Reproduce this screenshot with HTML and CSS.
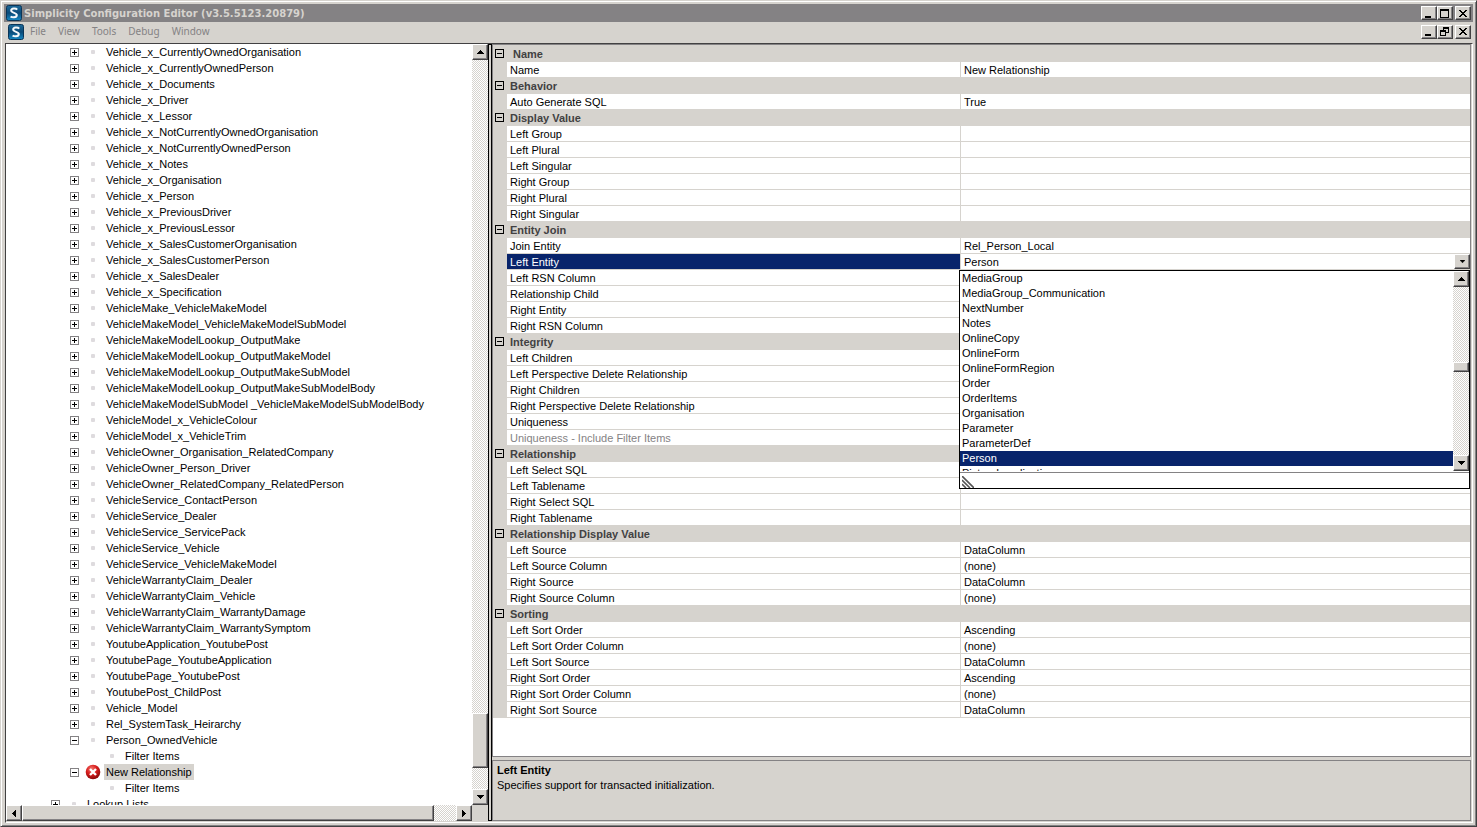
FILE: index.html
```html
<!DOCTYPE html>
<html lang="en">

<head>
    <meta charset="UTF-8">
    <meta name="viewport" content="width=device-width, initial-scale=1.0">
    <title>Simplicity Configuration Editor</title>
    <link rel="stylesheet" href="styles.css">
</head>

<body>
    <svg class="defs" width="0" height="0" aria-hidden="true">
        <defs>
            <linearGradient id="logoFill" x1="0" y1="0" x2="0" y2="1">
                <stop offset="0" stop-color="#1d6a9a"/>
                <stop offset="0.5" stop-color="#0b4a78"/>
                <stop offset="1" stop-color="#1488c4"/>
            </linearGradient>
            <radialGradient id="errorFill" cx="0.4" cy="0.3" r="0.7">
                <stop offset="0" stop-color="#f47a70"/>
                <stop offset="0.5" stop-color="#d81e1e"/>
                <stop offset="1" stop-color="#8c0808"/>
            </radialGradient>
            <symbol id="logo" viewBox="0 0 16 16">
                <rect x="0.5" y="0.5" width="15" height="15" rx="2" fill="url(#logoFill)" stroke="#0a3558"/>
                <path d="M11.2 4.6C10 3.2 5.2 3 5.2 5.6C5.2 8.2 11 7.6 10.8 10.2C10.6 13 6 12.6 4.6 11.4" fill="none" stroke="#f4f8fb" stroke-width="2"/>
            </symbol>
            <symbol id="up" viewBox="0 0 7 4"><path d="M3 0h1v1h1v1h1v1h1v1H0V3h1V2h1V1h1z"/></symbol>
            <symbol id="down" viewBox="0 0 7 4"><path d="M0 0h7v1H6v1H5v1H4v1H3V3H2V2H1V1H0z"/></symbol>
            <symbol id="left" viewBox="0 0 4 7"><path d="M4 0v7H3V6H2V5H1V4H0V3h1V2h1V1h1V0z"/></symbol>
            <symbol id="right" viewBox="0 0 4 7"><path d="M0 0v7h1V6h1V5h1V4h1V3H3V2H2V1H1V0z"/></symbol>
            <symbol id="min" viewBox="0 0 10 9"><path d="M1 7h6v2H1z"/></symbol>
            <symbol id="max" viewBox="0 0 10 9"><path d="M0 0h9v9H0zM1 2v6h7V2z" fill-rule="evenodd"/></symbol>
            <symbol id="restore" viewBox="0 0 10 9"><path d="M3 0h6v6H6v3H0V3h3zM4 2v1h2v2h2V2zM1 5v3h4V5z" fill-rule="evenodd"/></symbol>
            <symbol id="close" viewBox="0 0 10 9"><path d="M1 1h2v1h1v1h2V2h1V1h2v1H8v1H7v1H6v1h1v1h1v1h1v1H7V7H6V6H4v1H3v1H1V7h1V6h1V5h1V4H3V3H2V2H1z"/></symbol>
        </defs>
    </svg>

    <div class="window">
        <header class="title-bar">
            <svg class="logo"><use href="#logo"/></svg>
            <h1>Simplicity Configuration Editor (v3.5.5123.20879)</h1>
            <div class="window-buttons">
                <button aria-label="Minimize"><svg><use href="#min"/></svg></button>
                <button aria-label="Maximize"><svg><use href="#max"/></svg></button>
                <button class="close" aria-label="Close"><svg><use href="#close"/></svg></button>
            </div>
        </header>
        <nav class="menu-bar">
            <svg class="logo"><use href="#logo"/></svg>
            <button class="menu">File</button>
            <button class="menu">View</button>
            <button class="menu">Tools</button>
            <button class="menu">Debug</button>
            <button class="menu">Window</button>
            <div class="window-buttons">
                <button aria-label="Minimize child"><svg><use href="#min"/></svg></button>
                <button aria-label="Restore child"><svg><use href="#restore"/></svg></button>
                <button class="close" aria-label="Close child"><svg><use href="#close"/></svg></button>
            </div>
        </nav>

        <main class="content">
            <section class="tree-pane">
                <ul class="tree" id="tree"></ul>
                <div class="scroll-v tree-scroll">
                    <button aria-label="Scroll up"><svg><use href="#up"/></svg></button>
                    <div class="before"></div>
                    <div class="thumb"></div>
                    <div class="after"></div>
                    <button aria-label="Scroll down"><svg><use href="#down"/></svg></button>
                </div>
                <div class="scroll-h">
                    <button aria-label="Scroll left"><svg><use href="#left"/></svg></button>
                    <div class="thumb"></div>
                    <div class="after"></div>
                    <button aria-label="Scroll right"><svg><use href="#right"/></svg></button>
                </div>
            </section>
            <div class="splitter"></div>
            <section class="property-pane">
                <div class="property-grid">
                    <table>
                        <colgroup>
                            <col class="col-gutter">
                            <col class="col-name">
                            <col>
                        </colgroup>
                        <tbody id="properties"></tbody>
                    </table>
                </div>
                <div class="description">
                    <h2>Left Entity</h2>
                    <p>Specifies support for transacted initialization.</p>
                </div>
            </section>
        </main>
    </div>

    <template id="entityEditor">
        <div class="editor">
            <input type="text" id="leftEntity" value="Person">
            <button aria-label="Open list"><svg><use href="#down"/></svg></button>
        </div>
        <div class="drop-down">
            <div class="drop-list">
                <select size="14" aria-label="Left Entity">
                    <option>MediaGroup</option>
                    <option>MediaGroup_Communication</option>
                    <option>NextNumber</option>
                    <option>Notes</option>
                    <option>OnlineCopy</option>
                    <option>OnlineForm</option>
                    <option>OnlineFormRegion</option>
                    <option>Order</option>
                    <option>OrderItems</option>
                    <option>Organisation</option>
                    <option>Parameter</option>
                    <option>ParameterDef</option>
                    <option selected>Person</option>
                    <option>PictureLocalisation</option>
                </select>
                <div class="scroll-v list-scroll">
                    <button aria-label="Scroll list up"><svg><use href="#up"/></svg></button>
                    <div class="before"></div>
                    <div class="thumb"></div>
                    <div class="after"></div>
                    <button aria-label="Scroll list down"><svg><use href="#down"/></svg></button>
                </div>
            </div>
            <div class="grip">
                <svg width="12" height="12"><path d="M0 0L12 12M0 4L8 12M0 8L4 12" stroke="#555" stroke-width="1.6"/></svg>
            </div>
        </div>
    </template>

    <script src="app.js"></script>
</body>

</html>
```
FILE: app.js
```js
function $(id) {
    return document.getElementById(id)
}

const relationships = [
    'Vehicle_x_CurrentlyOwnedOrganisation',
    'Vehicle_x_CurrentlyOwnedPerson',
    'Vehicle_x_Documents',
    'Vehicle_x_Driver',
    'Vehicle_x_Lessor',
    'Vehicle_x_NotCurrentlyOwnedOrganisation',
    'Vehicle_x_NotCurrentlyOwnedPerson',
    'Vehicle_x_Notes',
    'Vehicle_x_Organisation',
    'Vehicle_x_Person',
    'Vehicle_x_PreviousDriver',
    'Vehicle_x_PreviousLessor',
    'Vehicle_x_SalesCustomerOrganisation',
    'Vehicle_x_SalesCustomerPerson',
    'Vehicle_x_SalesDealer',
    'Vehicle_x_Specification',
    'VehicleMake_VehicleMakeModel',
    'VehicleMakeModel_VehicleMakeModelSubModel',
    'VehicleMakeModelLookup_OutputMake',
    'VehicleMakeModelLookup_OutputMakeModel',
    'VehicleMakeModelLookup_OutputMakeSubModel',
    'VehicleMakeModelLookup_OutputMakeSubModelBody',
    'VehicleMakeModelSubModel _VehicleMakeModelSubModelBody',
    'VehicleModel_x_VehicleColour',
    'VehicleModel_x_VehicleTrim',
    'VehicleOwner_Organisation_RelatedCompany',
    'VehicleOwner_Person_Driver',
    'VehicleOwner_RelatedCompany_RelatedPerson',
    'VehicleService_ContactPerson',
    'VehicleService_Dealer',
    'VehicleService_ServicePack',
    'VehicleService_Vehicle',
    'VehicleService_VehicleMakeModel',
    'VehicleWarrantyClaim_Dealer',
    'VehicleWarrantyClaim_Vehicle',
    'VehicleWarrantyClaim_WarrantyDamage',
    'VehicleWarrantyClaim_WarrantySymptom',
    'YoutubeApplication_YoutubePost',
    'YoutubePage_YoutubeApplication',
    'YoutubePage_YoutubePost',
    'YoutubePost_ChildPost',
    'Vehicle_Model',
    'Rel_SystemTask_Heirarchy'
]

const nodes = relationships.map(name => ({ name, level: 'relation', sign: '+' })).concat([
    { name: 'Person_OwnedVehicle', level: 'relation', sign: '-' },
    { name: 'Filter Items', level: 'leaf' },
    { name: 'New Relationship', level: 'relation', sign: '-', error: true },
    { name: 'Filter Items', level: 'leaf' },
    { name: 'Lookup Lists', level: 'root', sign: '+' }
])

// a row is [name, value], a disabled row has a third item
const groups = {
    'Name': [['Name', 'New Relationship']],
    'Behavior': [['Auto Generate SQL', 'True']],
    'Display Value': [['Left Group'], ['Left Plural'], ['Left Singular'], ['Right Group'], ['Right Plural'], ['Right Singular']],
    'Entity Join': [['Join Entity', 'Rel_Person_Local'], ['Left Entity', 'Person'], ['Left RSN Column'], ['Relationship Child'], ['Right Entity'], ['Right RSN Column']],
    'Integrity': [['Left Children'], ['Left Perspective Delete Relationship'], ['Right Children'], ['Right Perspective Delete Relationship'], ['Uniqueness'], ['Uniqueness - Include Filter Items', '', true]],
    'Relationship': [['Left Select SQL'], ['Left Tablename'], ['Right Select SQL'], ['Right Tablename']],
    'Relationship Display Value': [['Left Source', 'DataColumn'], ['Left Source Column', '(none)'], ['Right Source', 'DataColumn'], ['Right Source Column', '(none)']],
    'Sorting': [['Left Sort Order', 'Ascending'], ['Left Sort Order Column', '(none)'], ['Left Sort Source', 'DataColumn'], ['Right Sort Order', 'Ascending'], ['Right Sort Order Column', '(none)'], ['Right Sort Source', 'DataColumn']]
}

function expander(sign, label) {
    const path = sign == '+' ? 'M2 4h5v1H2zM4 2h1v5H4z' : 'M2 4h5v1H2z'
    return `<button class="expander" aria-label="Toggle ${label}"><svg viewBox="0 0 9 9"><path class="frame" d="M0 0h9v9H0zM1 1v7h7V1z" fill-rule="evenodd"/><path d="${path}"/></svg></button>`
}

function nodeIcon(node) {
    if (!node.error) return '<span class="dot"></span>'
    return '<svg class="error" viewBox="0 0 16 16"><circle cx="8" cy="8" r="7.3" fill="url(#errorFill)"/><path d="M5 5L11 11M11 5L5 11" stroke="#fff" stroke-width="2.4"/></svg>'
}

$('tree').innerHTML = nodes.map(node => `<li class="${node.level}">
    ${node.sign ? expander(node.sign, node.name) : ''}
    <span class="icon">${nodeIcon(node)}</span>
    <span class="label ${node.error ? 'selected' : ''}">${node.name}</span>
</li>`).join('')

function propertyRow([name, value, disabled]) {
    const current = name == 'Left Entity'
    return `<tr class="${current ? 'current' : ''} ${disabled ? 'disabled' : ''}">
        <td class="gutter"></td>
        <th scope="row">${current ? '<label for="leftEntity">Left Entity</label>' : name}</th>
        <td class="value">${current ? $('entityEditor').innerHTML : value || ''}</td>
    </tr>`
}

$('properties').innerHTML = Object.keys(groups).map(group => `<tr class="category">
    <td class="gutter">${expander('-', group)}</td>
    <th colspan="2" class="${group == 'Name' ? 'first' : ''}">${group}</th>
</tr>` + groups[group].map(propertyRow).join('')).join('')
```
FILE: styles.css
```css
* {
    box-sizing: border-box;
}

body {
    margin: 0;
    height: 100vh;
    overflow: hidden;
    background-color: #d6d3ce;
    color: #000;
    font-family: "Liberation Sans", Arial, sans-serif;
    font-size: 11px;
    line-height: 15px;
}

button {
    display: flex;
    align-items: center;
    justify-content: center;
    flex: none;
    margin: 0;
    padding: 0;
    border: 1px solid;
    border-color: #fff #424142 #424142 #fff;
    background-color: #d6d3ce;
    box-shadow: inset -1px -1px #848284;
    font: inherit;
}

h1, h2, p, ul {
    margin: 0;
    padding: 0;
}

.defs {
    position: absolute;
}

.window {
    display: flex;
    flex-direction: column;
    height: 100%;
    padding: 3px;
    border: 1px solid;
    border-color: #d6d3ce #424142 #424142 #d6d3ce;
    box-shadow: inset 1px 1px #fff, inset -1px -1px #848284;
}

.title-bar {
    display: flex;
    align-items: center;
    gap: 2px;
    flex: none;
    height: 18px;
    padding: 0 2px;
    background-color: #848284;
    color: #d6d3ce;
}

.title-bar h1 {
    flex: 1;
    font-family: "DejaVu Sans", sans-serif;
    font-size: 10px;
    font-weight: bold;
}

.logo {
    flex: none;
    width: 16px;
    height: 16px;
}

.window-buttons {
    display: flex;
}

.window-buttons button {
    width: 16px;
    height: 14px;
}

.window-buttons svg {
    width: 10px;
    height: 9px;
}

.window-buttons .close {
    margin-left: 2px;
}

.menu-bar {
    display: flex;
    align-items: center;
    flex: none;
    height: 21px;
    padding: 0 2px 2px 4px;
}

.menu {
    padding: 0 6px;
    border: 0;
    box-shadow: none;
    color: #848284;
    font-family: "Noto Sans", sans-serif;
    font-size: 10px;
}

.menu-bar .window-buttons {
    margin-left: auto;
}

.content {
    display: flex;
    flex: 1;
    min-height: 0;
    margin-left: 1px;
    padding: 0 1px 1px 0;
    border: 1px solid;
    border-color: #424142 #fff #fff #424142;
}

.tree-pane {
    display: grid;
    grid-template-columns: 1fr 16px;
    grid-template-rows: 1fr 16px;
    flex: none;
    width: 482px;
}

.tree {
    overflow: hidden;
    background-color: #fff;
    list-style: none;
}

.tree li {
    display: flex;
    align-items: center;
    height: 16px;
    white-space: nowrap;
}

.tree .relation {
    padding-left: 64px;
}

.tree .leaf {
    padding-left: 98px;
}

.tree .root {
    padding-left: 45px;
}

.expander {
    border: 0;
    background-color: #fff;
    box-shadow: none;
}

.expander svg {
    display: block;
    width: 9px;
    height: 9px;
}

.frame {
    fill: #848284;
}

.icon {
    display: flex;
    align-items: center;
    justify-content: center;
    width: 16px;
    height: 16px;
}

.expander + .icon {
    margin-left: 6px;
}

.dot {
    width: 4px;
    height: 4px;
    border-radius: 1px;
    background-color: #dedbde;
}

.error {
    width: 16px;
    height: 16px;
}

.label {
    height: 16px;
    margin-left: 3px;
    padding: 0 2px;
    line-height: 16px;
}

.label.selected {
    background-color: #d6d3ce;
}

.scroll-v,
.scroll-h {
    display: flex;
    background: repeating-conic-gradient(#fff 0 25%, #d6d3ce 0 50%) 0 0 / 2px 2px;
}

.scroll-v {
    flex-direction: column;
    width: 16px;
}

.scroll-v button,
.scroll-h button {
    width: 16px;
    height: 16px;
}

.scroll-v svg,
.editor svg {
    width: 7px;
    height: 4px;
}

.scroll-h svg {
    width: 4px;
    height: 7px;
}

.thumb {
    border: 1px solid;
    border-color: #fff #424142 #424142 #fff;
    background-color: #d6d3ce;
    box-shadow: inset -1px -1px #848284;
}

.tree-scroll .before {
    flex: 654;
}

.tree-scroll .thumb {
    flex: 53;
}

.tree-scroll .after {
    flex: 21;
}

.scroll-h .thumb {
    flex: 412;
}

.scroll-h .after {
    flex: 22;
}

.splitter {
    flex: none;
    width: 4px;
    border: 1px solid #000;
    background-color: #d6d3ce;
    cursor: col-resize;
}

.property-pane {
    display: flex;
    flex: 1;
    flex-direction: column;
    gap: 3px;
    min-width: 0;
}

.property-grid {
    flex: 1;
    min-height: 0;
    border: 1px solid #848284;
    background-color: #fff;
}

.property-grid table {
    width: 100%;
    border-top: 1px solid #d6d3ce;
    border-spacing: 0;
    table-layout: fixed;
}

.col-gutter {
    width: 14px;
}

.col-name {
    width: 454px;
}

.property-grid tr {
    height: 16px;
}

.property-grid th,
.property-grid td {
    height: 16px;
    padding: 1px 3px 0;
    border-bottom: 1px solid #d6d3ce;
    font-weight: normal;
    line-height: 14px;
    text-align: left;
    white-space: nowrap;
}

.property-grid th {
    border-right: 1px solid #d6d3ce;
}

.property-grid .gutter {
    padding: 0 2px;
    background-color: #d6d3ce;
}

.property-grid .category th {
    border-right: 0;
    background-color: #d6d3ce;
    color: #424142;
    font-weight: bold;
}

.property-grid .category .first {
    padding-left: 6px;
}

.gutter .expander {
    background-color: #d6d3ce;
}

.gutter .frame {
    fill: #000;
}

.property-grid .current th {
    background-color: #08246b;
    color: #fff;
}

.property-grid .disabled th {
    color: #848284;
}

.property-grid .value {
    position: relative;
}

.property-grid .current .value {
    padding: 0 0 0 3px;
}

.editor {
    display: flex;
    height: 15px;
}

.editor input {
    flex: 1;
    min-width: 0;
    padding: 1px 0 0;
    border: 0;
    outline: 0;
    background-color: #fff;
    color: #000;
    font: inherit;
}

.editor button {
    width: 16px;
    height: 15px;
}

.editor svg {
    width: 5px;
    height: 3px;
}

/* list that opens under the value cell */
.drop-down {
    position: absolute;
    top: 16px;
    right: 0;
    left: -2px;
    z-index: 1;
    border: 1px solid #000;
    background-color: #fff;
}

.drop-list {
    display: flex;
    height: 200px;
}

.drop-list select {
    flex: 1;
    height: 200px;
    min-width: 0;
    padding: 0;
    border: 0;
    outline: 0;
    overflow: hidden;
    background-color: #fff;
    color: #000;
    font: inherit;
}

.drop-list option {
    height: 15px;
    min-height: 15px;
    padding: 1px 2px 0;
    line-height: 14px;
}

.drop-list option:checked {
    background: linear-gradient(#08246b, #08246b);
    color: #fff;
    -webkit-text-fill-color: #fff;
}

.list-scroll .before {
    flex: 76;
}

.list-scroll .thumb {
    flex: 8;
}

.list-scroll .after {
    flex: 85;
}

.grip {
    display: flex;
    align-items: flex-end;
    height: 16px;
    margin-top: 1px;
    padding-left: 2px;
    border-top: 1px solid #848284;
}

.description {
    flex: none;
    height: 61px;
    padding: 2px 4px;
    border: 1px solid #848284;
}

.description h2 {
    font-size: 11px;
    font-weight: bold;
}
```
